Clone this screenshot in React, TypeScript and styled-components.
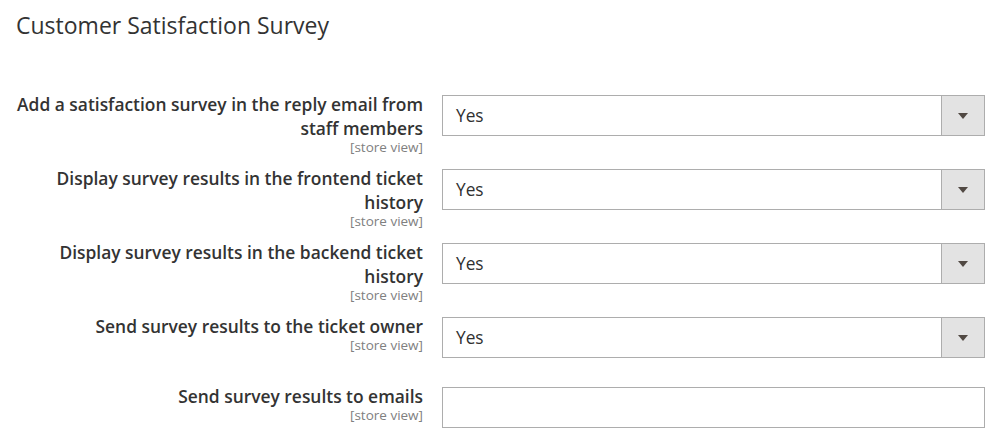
import React from 'react';
import styled, { createGlobalStyle } from 'styled-components';

const GlobalStyle = createGlobalStyle`
  body {
    margin: 0;
    background: #ffffff;
    font-family: "Open Sans", "Liberation Sans", sans-serif;
    color: #303030;
  }
`;

const Page = styled.div`
  width: 1008px;
  height: 440px;
  box-sizing: border-box;
  padding: 11px 23px 0 16px;
  overflow: hidden;
`;

const SectionTitle = styled.h2`
  margin: 0 0 53px;
  font-size: 23px;
  line-height: 28px;
  font-weight: 400;
  color: #333333;
`;

const Fields = styled.div`
  display: flex;
  flex-direction: column;
  gap: 26px;
`;

const FieldRow = styled.div`
  display: grid;
  grid-template-columns: 407px 1fr;
  column-gap: 19px;
  align-items: start;
`;

const Label = styled.div`
  text-align: right;
  font-size: 17.4px;
  line-height: 24px;
  font-weight: 600;
  color: #333333;
`;

// sits under the label like Magento's scope hint, without pushing the row height
const Scope = styled.div`
  font-size: 13.5px;
  line-height: 14px;
  font-weight: 400;
  color: #808080;
  height: 14px;
  margin: 0 0 -14px;
`;

const Control = styled.div`
  margin-top: 3px;
`;

const SelectBox = styled.div`
  display: flex;
  height: 41px;
  box-sizing: border-box;
  border: 1px solid #adadad;
  background: #ffffff;
`;

const SelectValue = styled.div`
  flex: 1;
  display: flex;
  align-items: center;
  padding-left: 13px;
  font-size: 17.3px;
  color: #303030;
`;

const SelectButton = styled.div`
  width: 42px;
  display: flex;
  align-items: center;
  justify-content: center;
  background: #e3e3e3;
  border-left: 1px solid #adadad;
`;

const Arrow = styled.span`
  width: 0;
  height: 0;
  border-left: 5px solid transparent;
  border-right: 5px solid transparent;
  border-top: 6px solid #514943;
  margin-top: 1px;
`;

const TextInput = styled.input`
  display: block;
  width: 100%;
  height: 41px;
  box-sizing: border-box;
  border: 1px solid #adadad;
  border-radius: 0;
  padding: 0 13px;
  font-family: inherit;
  font-size: 17px;
  outline: none;
`;

type Field = {
  label: string;
  type: 'select' | 'text';
  value?: string;
};

const fields: Field[] = [
  { label: 'Add a satisfaction survey in the reply email from staff members', type: 'select', value: 'Yes' },
  { label: 'Display survey results in the frontend ticket history', type: 'select', value: 'Yes' },
  { label: 'Display survey results in the backend ticket history', type: 'select', value: 'Yes' },
  { label: 'Send survey results to the ticket owner', type: 'select', value: 'Yes' },
  { label: 'Send survey results to emails', type: 'text' },
];

const App: React.FC = () => {
  return (
    <>
      <GlobalStyle />
      <Page>
        <SectionTitle>Customer Satisfaction Survey</SectionTitle>
        <Fields>
          {fields.map((f) => (
            <FieldRow key={f.label}>
              <Label>
                {f.label}
                <Scope>[store view]</Scope>
              </Label>
              <Control>
                {f.type === 'select' ? (
                  <SelectBox>
                    <SelectValue>{f.value}</SelectValue>
                    <SelectButton>
                      <Arrow />
                    </SelectButton>
                  </SelectBox>
                ) : (
                  <TextInput type="text" defaultValue="" />
                )}
              </Control>
            </FieldRow>
          ))}
        </Fields>
      </Page>
    </>
  );
};

export default App;
